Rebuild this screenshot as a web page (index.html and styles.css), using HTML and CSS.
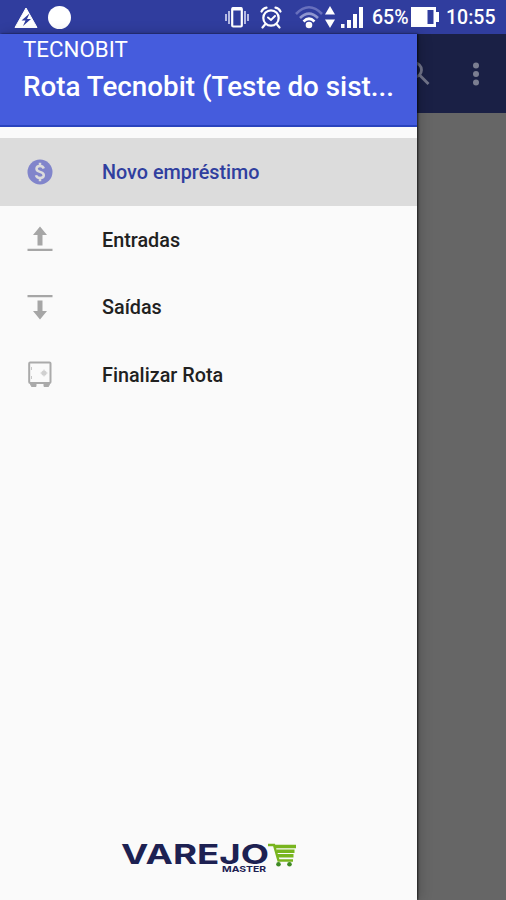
FILE: index.html
```html
<!DOCTYPE html>
<html lang="pt-BR">
<head>
    <meta charset="UTF-8">
    <meta name="viewport" content="width=device-width, initial-scale=1.0">
    <title>Rota Tecnobit</title>

    <link rel="stylesheet" href="styles.css">
</head>
<body>
    <header class="status_bar">
        <svg class="warning" width="24" height="22" viewBox="0 0 24 22">
            <path d="M12 1L23 20.500H1z" fill="#fff" stroke="#fff" stroke-linejoin="round"/>
            <path d="M15.500 6.500L7.500 13.500h4l-2.500 5.500 8-7h-4z" fill="#303d9e"/>
        </svg>
        <span class="dot"></span>

        <div class="status_icons">
            <svg class="vibrate" width="24" height="22" viewBox="0 0 24 22">
                <path d="M1 8v7M4 5v13M20 5v13M23 8v7" stroke="#b5bae3" stroke-width="2"/>
                <rect x="7.200" y="2" width="9.600" height="18.500" rx="1" fill="none" stroke="#fff" stroke-width="2.200"/>
                <path d="M7 3h10" stroke="#fff" stroke-width="3"/>
            </svg>
            <svg class="alarm" width="22" height="23" viewBox="0 0 22 23">
                <g fill="none" stroke="#fff" stroke-width="2.200" stroke-linecap="round">
                    <circle cx="11" cy="12" r="7.700"/>
                    <path d="M1.500 5.500Q3 2 6.500 1.600M20.500 5.500Q19 2 15.500 1.600M5 18.500l-2.500 3M17 18.500l2.500 3"/>
                    <path d="M8 11.500l3 2.500 4-4" stroke-width="2"/>
                </g>
            </svg>
            <svg class="wifi" width="28" height="24" viewBox="0 0 28 24">
                <g fill="none" stroke-width="2.600">
                    <path d="M1 9Q14-4.500 27 9" stroke="#6870bd"/>
                    <path d="M5 13Q14 4 23 13" stroke="#8f96d0"/>
                    <path d="M8.500 16.500Q14 11 19.500 16.500" stroke="#fff"/>
                </g>
                <circle cx="14" cy="20" r="3.300" fill="#fff"/>
            </svg>
            <svg class="traffic" width="10" height="22" viewBox="0 0 10 22">
                <path d="M5 0l5 8.500H0zM5 22l5-8.500H0z" fill="#fff"/>
            </svg>
            <svg class="signal" width="22" height="21" viewBox="0 0 22 21">
                <path d="M0 17h3.500v4H0zM6 13h4v8H6zM12 7h4v14h-4zM18 0h4v21h-4z" fill="#fff"/>
            </svg>
            <span class="percent">65%</span>
            <svg class="battery" width="28" height="20" viewBox="0 0 28 20">
                <path d="M0 0h25v5h3v10h-3v5H0z" fill="#fff"/>
                <path d="M16.500 3h6v14h-6z" fill="#303d9e"/>
            </svg>
            <span class="clock">10:55</span>
        </div>
    </header>

    <main class="screen">
        <div class="toolbar">
            <svg class="search" width="25" height="26" viewBox="0 0 25 26">
                <g fill="none" stroke="#72758a" stroke-width="2.800">
                    <circle cx="8.500" cy="9" r="7"/>
                    <path d="M13.500 14l9 9"/>
                </g>
            </svg>
            <svg class="more" width="8" height="24" viewBox="0 0 8 24">
                <g fill="#7b7e91">
                    <circle cx="4" cy="3.500" r="3"/>
                    <circle cx="4" cy="12" r="3"/>
                    <circle cx="4" cy="20.500" r="3"/>
                </g>
            </svg>
        </div>

        <nav class="drawer">
            <div class="drawer_header">
                <p class="company">TECNOBIT</p>
                <h1>Rota Tecnobit (Teste do sist...</h1>
            </div>

            <ul class="menu">
                <li class="item active">
                    <svg width="28" height="28" viewBox="0 0 28 28">
                        <circle cx="14" cy="14" r="12.500" fill="#8185cb"/>
                        <path d="M17.800 10.500Q17 8 14 8q-3.500 0-3.500 2.800 0 2.200 3.500 3.100 3.800.9 3.800 3.400 0 2.700-3.800 2.700-3.400 0-4-2.700M14 4.800v3.500M14 19.700v3.500" fill="none" stroke="#dcdcdc" stroke-width="2.500"/>
                    </svg>
                    <span>Novo empréstimo</span>
                </li>
                <li class="item">
                    <svg width="28" height="28" viewBox="0 0 28 28">
                        <path d="M14 1.500l7 8.500h-4.500v10.500h-5V10H7zM1.500 23.700h25V26h-25z" fill="#a6a6a6"/>
                    </svg>
                    <span>Entradas</span>
                </li>
                <li class="item">
                    <svg width="28" height="28" viewBox="0 0 28 28">
                        <path d="M14 26.500L7 18h4.500V7.500h5V18H21zM1.500 2h25v2.300h-25z" fill="#a6a6a6"/>
                    </svg>
                    <span>Saídas</span>
                </li>
                <li class="item">
                    <svg width="28" height="28" viewBox="0 0 28 28">
                        <rect x="3.200" y="2.500" width="21.300" height="20.500" rx="1" fill="none" stroke="#aaa" stroke-width="2"/>
                        <path d="M4.500 24h5.500v2.500H5.500zM18 24h5.500l-1 2.500H18z" fill="#aaa" stroke="#aaa"/>
                        <path d="M5.500 7v3M5.500 16v3" stroke="#c8c8c8"/>
                        <circle cx="18" cy="13" r="2.600" fill="#d0d0d0"/>
                        <path d="M18 9.500v7M14.500 13h7" stroke="#d0d0d0"/>
                    </svg>
                    <span>Finalizar Rota</span>
                </li>
            </ul>

            <svg class="logo" width="178" height="38" viewBox="0 0 178 38">
                <text class="logo_name" x="1" y="24" textLength="148" lengthAdjust="spacingAndGlyphs">VAREJO</text>
                <text class="logo_sub" x="102" y="32" textLength="44" lengthAdjust="spacingAndGlyphs">MASTER</text>
                <path d="M148 5h6l4.500 15.500H173" fill="none" stroke="#78b51e" stroke-width="2.400"/>
                <path d="M155 6.500H176M156.500 11.200h18M158 15.800h15.500" stroke="#78b51e" stroke-width="3.600"/>
                <circle cx="158.500" cy="24.300" r="2.300" fill="#3f8a24"/>
                <circle cx="169.500" cy="24.300" r="2.300" fill="#3f8a24"/>
            </svg>
        </nav>
    </main>
</body>
</html>
```
FILE: styles.css
```css
*{
    margin: 0;
    padding: 0;
    box-sizing: border-box;
}

body{
    height: 100vh;
    display: flex;
    flex-direction: column;
    overflow: hidden;
    font-family: Roboto, "Noto Sans", sans-serif;
    background: #666;
}

svg{
    display: block;
    flex-shrink: 0;
}

.status_bar{
    height: 34px;
    padding: 0 10px 0 14px;
    display: flex;
    align-items: center;
    color: #fff;
    background: #303d9e;
}

.warning{
    margin-top: 1px;
}

.dot{
    width: 23px;
    height: 23px;
    margin-left: 10px;
    border-radius: 50%;
    background: #fff;
}

.status_icons{
    margin-left: auto;
    display: flex;
    align-items: center;
    font-size: 19.5px;
    font-weight: 500;
    white-space: nowrap;
}

.alarm{
    margin-left: 11px;
}

.wifi{
    margin-left: 13px;
}

.traffic{
    margin-left: 2px;
}

.signal{
    margin-left: 6px;
}

.percent{
    width: 39px;
    margin-left: 9px;
    padding-top: 1px;
    font-size: 19.5px;
}

.clock{
    width: 50px;
    margin-left: 7px;
    padding-top: 1px;
}

.screen{
    flex: 1;
    position: relative;
}

.toolbar{
    height: 79px;
    padding-right: 26px;
    display: flex;
    align-items: center;
    justify-content: flex-end;
    gap: 41px;
    background: #1a2045;
}

/* slides over the dimmed screen */
.drawer{
    position: absolute;
    top: 0;
    bottom: 0;
    left: 0;
    width: 417px;
    display: flex;
    flex-direction: column;
    background: #fafafa;
    box-shadow: 1px 0 2px rgba(0, 0, 0, .7), 3px 0 12px rgba(0, 0, 0, .2);
}

.drawer_header{
    height: 93px;
    padding: 2px 23px 0;
    color: #fff;
    background: #455cdd;
    border-bottom: 2px solid #2943be;
}

.company{
    font-size: 22.3px;
    line-height: 27px;
}

h1{
    margin-top: 6px;
    font-size: 27.8px;
    font-weight: 500;
    line-height: 36px;
    white-space: nowrap;
}

.menu{
    margin-top: 11px;
    list-style: none;
}

.item{
    height: 67.5px;
    padding-left: 26px;
    display: flex;
    align-items: center;
    gap: 48px;
    font-size: 19.8px;
    font-weight: 500;
    color: #212121;
}

.item span{
    padding-top: 2px;
}

.item.active{
    color: #303f9f;
    background: #dcdcdc;
}

.logo{
    margin: auto 0 22px 120px;
}

.logo_name{
    font: bold 27.5px Inter, sans-serif;
    fill: #1d2152;
}

.logo_sub{
    font: bold 8px Inter, sans-serif;
    fill: #1d2152;
}
```
